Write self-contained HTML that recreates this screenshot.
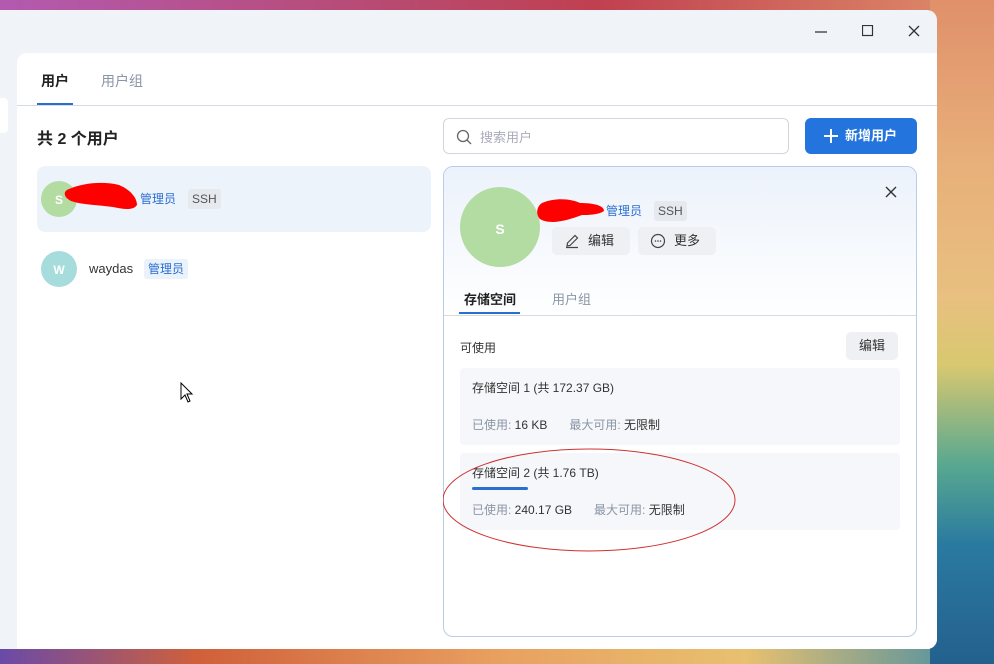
<!DOCTYPE html><html><head><meta charset="utf-8"><style>
*{margin:0;padding:0;box-sizing:border-box}
body{width:994px;height:664px;overflow:hidden;position:relative;font-family:"Liberation Sans","Noto Sans CJK SC",sans-serif;background:linear-gradient(90deg,#6a4aa8 0%,#d0603a 20%,#e8a060 50%,#e8c070 75%,#3a8aa8 100%)}
.top{position:absolute;left:0;top:0;width:994px;height:12px;background:linear-gradient(90deg,#b35ab0,#b84a70 40%,#c04050 60%,#e0906a 100%)}
.right{position:absolute;left:930px;top:0;width:64px;height:664px;background:linear-gradient(180deg,#e0906a 0%,#e8b07a 25%,#e8c080 45%,#d8c870 55%,#58a890 70%,#2a7aa0 82%,#24608e 100%)}
.win{position:absolute;left:0;top:10px;width:937px;height:639px;background:#f0f3f8;border-radius:0 10px 10px 0;overflow:hidden}
.ctrl{position:absolute;top:14px;color:#333}
.panel{position:absolute;left:17px;top:43px;width:920px;height:596px;background:#fff;border-radius:10px 0 0 0}
.abs{position:absolute}
.tag{position:absolute;font-size:12px;padding:0 4px;height:20px;line-height:20px;border-radius:3px}
.blue{color:#2a6fcf;background:#eaf2fc}
.gray{color:#555;background:#e6e9ee}
</style></head><body>
<div class="top"></div><div class="right"></div>
<div class="win">
 <svg class="ctrl" style="left:814px;top:15px" width="14" height="14"><path d="M1 7H13" stroke="#333" stroke-width="1.3"/></svg>
 <svg class="ctrl" style="left:862px;top:15px" width="12" height="12"><rect x="0.5" y="0.5" width="10" height="10" fill="none" stroke="#333" stroke-width="1.2"/></svg>
 <svg class="ctrl" style="left:908px;top:15px" width="12" height="12"><path d="M1 1L11 11M11 1L1 11" stroke="#333" stroke-width="1.3"/></svg>
 <div class="abs" style="left:0;top:88px;width:8px;height:35px;background:#fff;border-radius:0 4px 4px 0"></div>
 <div class="panel">
  <div class="abs" style="left:24px;top:18px;font-size:14px;font-weight:bold;color:#222">用户</div>
  <div class="abs" style="left:84px;top:18px;font-size:14px;color:#8a95a5">用户组</div>
  <div class="abs" style="left:20px;top:50px;width:36px;height:2px;background:#2a6fcf"></div>
  <div class="abs" style="left:0;top:52px;width:920px;height:1px;background:#d5dbe3"></div>
  <div class="abs" style="left:20px;top:72px;font-size:16px;font-weight:bold;color:#222">共 2 个用户</div>
  <div class="abs" style="left:20px;top:113px;width:394px;height:66px;background:#edf3fb;border-radius:8px"></div>
  <div class="abs" style="left:24px;top:128px;width:36px;height:36px;border-radius:50%;background:#b2dca2;color:#fff;font-size:12px;font-weight:bold;text-align:center;line-height:38px">S</div>
  <svg class="abs" style="left:46px;top:128px" width="80" height="34"><path d="M6 8C20 2 40 0 56 4C66 8 74 16 74 24C70 30 60 28 50 26C36 24 20 24 8 20C0 16 0 10 6 8Z" fill="#f00"/></svg>
  <div class="tag blue" style="left:119px;top:136px;background:none">管理员</div>
  <div class="tag gray" style="left:171px;top:136px">SSH</div>
  <div class="abs" style="left:24px;top:198px;width:36px;height:36px;border-radius:50%;background:#a6dcdc;color:#fff;font-size:12px;font-weight:bold;text-align:center;line-height:38px">W</div>
  <div class="abs" style="left:72px;top:208px;font-size:13px;color:#333">waydas</div>
  <div class="tag blue" style="left:127px;top:206px">管理员</div>
  <div class="abs" style="left:426px;top:65px;width:346px;height:36px;border:1px solid #d0d6de;border-radius:6px"></div>
  <svg class="abs" style="left:439px;top:76px" width="16" height="16"><circle cx="7" cy="7" r="5.5" fill="none" stroke="#666" stroke-width="1.3"/><path d="M11 11L15 15" stroke="#666" stroke-width="1.3"/></svg>
  <div class="abs" style="left:463px;top:74px;font-size:13px;color:#aab">搜索用户</div>
  <div class="abs" style="left:788px;top:65px;width:112px;height:36px;background:#2474de;border-radius:6px;color:#fff;font-size:13px;font-weight:bold;line-height:36px;padding-left:40px">新增用户</div>
  <svg class="abs" style="left:806px;top:75px" width="16" height="16"><path d="M8 1V15M1 8H15" stroke="#fff" stroke-width="2"/></svg>
  <div class="abs" style="left:426px;top:113px;width:474px;height:471px;border:1px solid #b8cde6;border-radius:10px;overflow:hidden;background:#fff">
   <div class="abs" style="left:0;top:0;width:474px;height:150px;background:linear-gradient(180deg,#ecf2fb,#fff)"></div>
   <div class="abs" style="left:16px;top:20px;width:80px;height:80px;border-radius:50%;background:#b2dca2;color:#fff;font-size:14px;font-weight:bold;text-align:center;line-height:84px">S</div>
   <svg class="abs" style="left:92px;top:30px" width="80" height="30"><path d="M6 6C20 0 36 2 44 6C56 6 68 8 68 14C62 18 52 18 46 18C30 24 14 28 4 22C0 18 0 10 6 6Z" fill="#f00"/></svg>
   <div class="tag blue" style="left:158px;top:34px;background:none">管理员</div>
   <div class="tag gray" style="left:210px;top:34px">SSH</div>
   <div class="abs" style="left:108px;top:60px;width:78px;height:28px;background:#eef0f3;border-radius:5px;font-size:13px;color:#333;line-height:28px;padding-left:36px">编辑</div>
   <svg class="abs" style="left:120px;top:66px" width="16" height="16"><path d="M3 13L3.5 10L11 2.5L13.5 5L6 12.5ZM2 14.5H14" fill="none" stroke="#444" stroke-width="1.2"/></svg>
   <div class="abs" style="left:194px;top:60px;width:78px;height:28px;background:#eef0f3;border-radius:5px;font-size:13px;color:#333;line-height:28px;padding-left:36px">更多</div>
   <svg class="abs" style="left:206px;top:66px" width="16" height="16"><circle cx="8" cy="8" r="6.5" fill="none" stroke="#444" stroke-width="1.2"/><circle cx="5.5" cy="8" r=".8" fill="#444"/><circle cx="8" cy="8" r=".8" fill="#444"/><circle cx="10.5" cy="8" r=".8" fill="#444"/></svg>
   <svg class="abs" style="left:441px;top:19px" width="12" height="12"><path d="M1 1L11 11M11 1L1 11" stroke="#333" stroke-width="1.4"/></svg>
   <div class="abs" style="left:20px;top:122px;font-size:13px;font-weight:bold;color:#222">存储空间</div>
   <div class="abs" style="left:108px;top:122px;font-size:13px;color:#8a95a5">用户组</div>
   <div class="abs" style="left:15px;top:145px;width:61px;height:2px;background:#2a6fcf"></div>
   <div class="abs" style="left:0;top:148px;width:474px;height:1px;background:#d5dbe3"></div>
   <div class="abs" style="left:16px;top:172px;font-size:12px;color:#333">可使用</div>
   <div class="abs" style="left:402px;top:165px;width:52px;height:28px;background:#eef0f3;border-radius:5px;font-size:13px;color:#333;line-height:28px;text-align:center">编辑</div>
   <div class="abs" style="left:16px;top:201px;width:440px;height:77px;background:#f5f7fa;border-radius:4px"></div>
   <div class="abs" style="left:28px;top:212px;font-size:12px;color:#333">存储空间 1 (共 172.37 GB)</div>
   <div class="abs" style="left:28px;top:249px;font-size:12px;color:#8a95a5">已使用: <span style="color:#333">16 KB</span><span style="margin-left:22px">最大可用: </span><span style="color:#333">无限制</span></div>
   <div class="abs" style="left:16px;top:286px;width:440px;height:77px;background:#f5f7fa;border-radius:4px"></div>
   <div class="abs" style="left:28px;top:297px;font-size:12px;color:#333">存储空间 2 (共 1.76 TB)</div>
   <div class="abs" style="left:28px;top:320px;width:56px;height:3px;background:#2a6fcf;border-radius:2px"></div>
   <div class="abs" style="left:28px;top:334px;font-size:12px;color:#8a95a5">已使用: <span style="color:#333">240.17 GB</span><span style="margin-left:22px">最大可用: </span><span style="color:#333">无限制</span></div>
  </div>
  <svg class="abs" style="left:426px;top:392px" width="300" height="120"><ellipse cx="146" cy="55" rx="146" ry="51" fill="none" stroke="#d03030" stroke-width="1"/></svg>
  <svg class="abs" style="left:163px;top:329px" width="14" height="22"><path d="M1 1V17L5 13L8 20L10 19L7 12H12Z" fill="#fff" stroke="#000" stroke-width="1"/></svg>
 </div>
</div>
</body></html>
